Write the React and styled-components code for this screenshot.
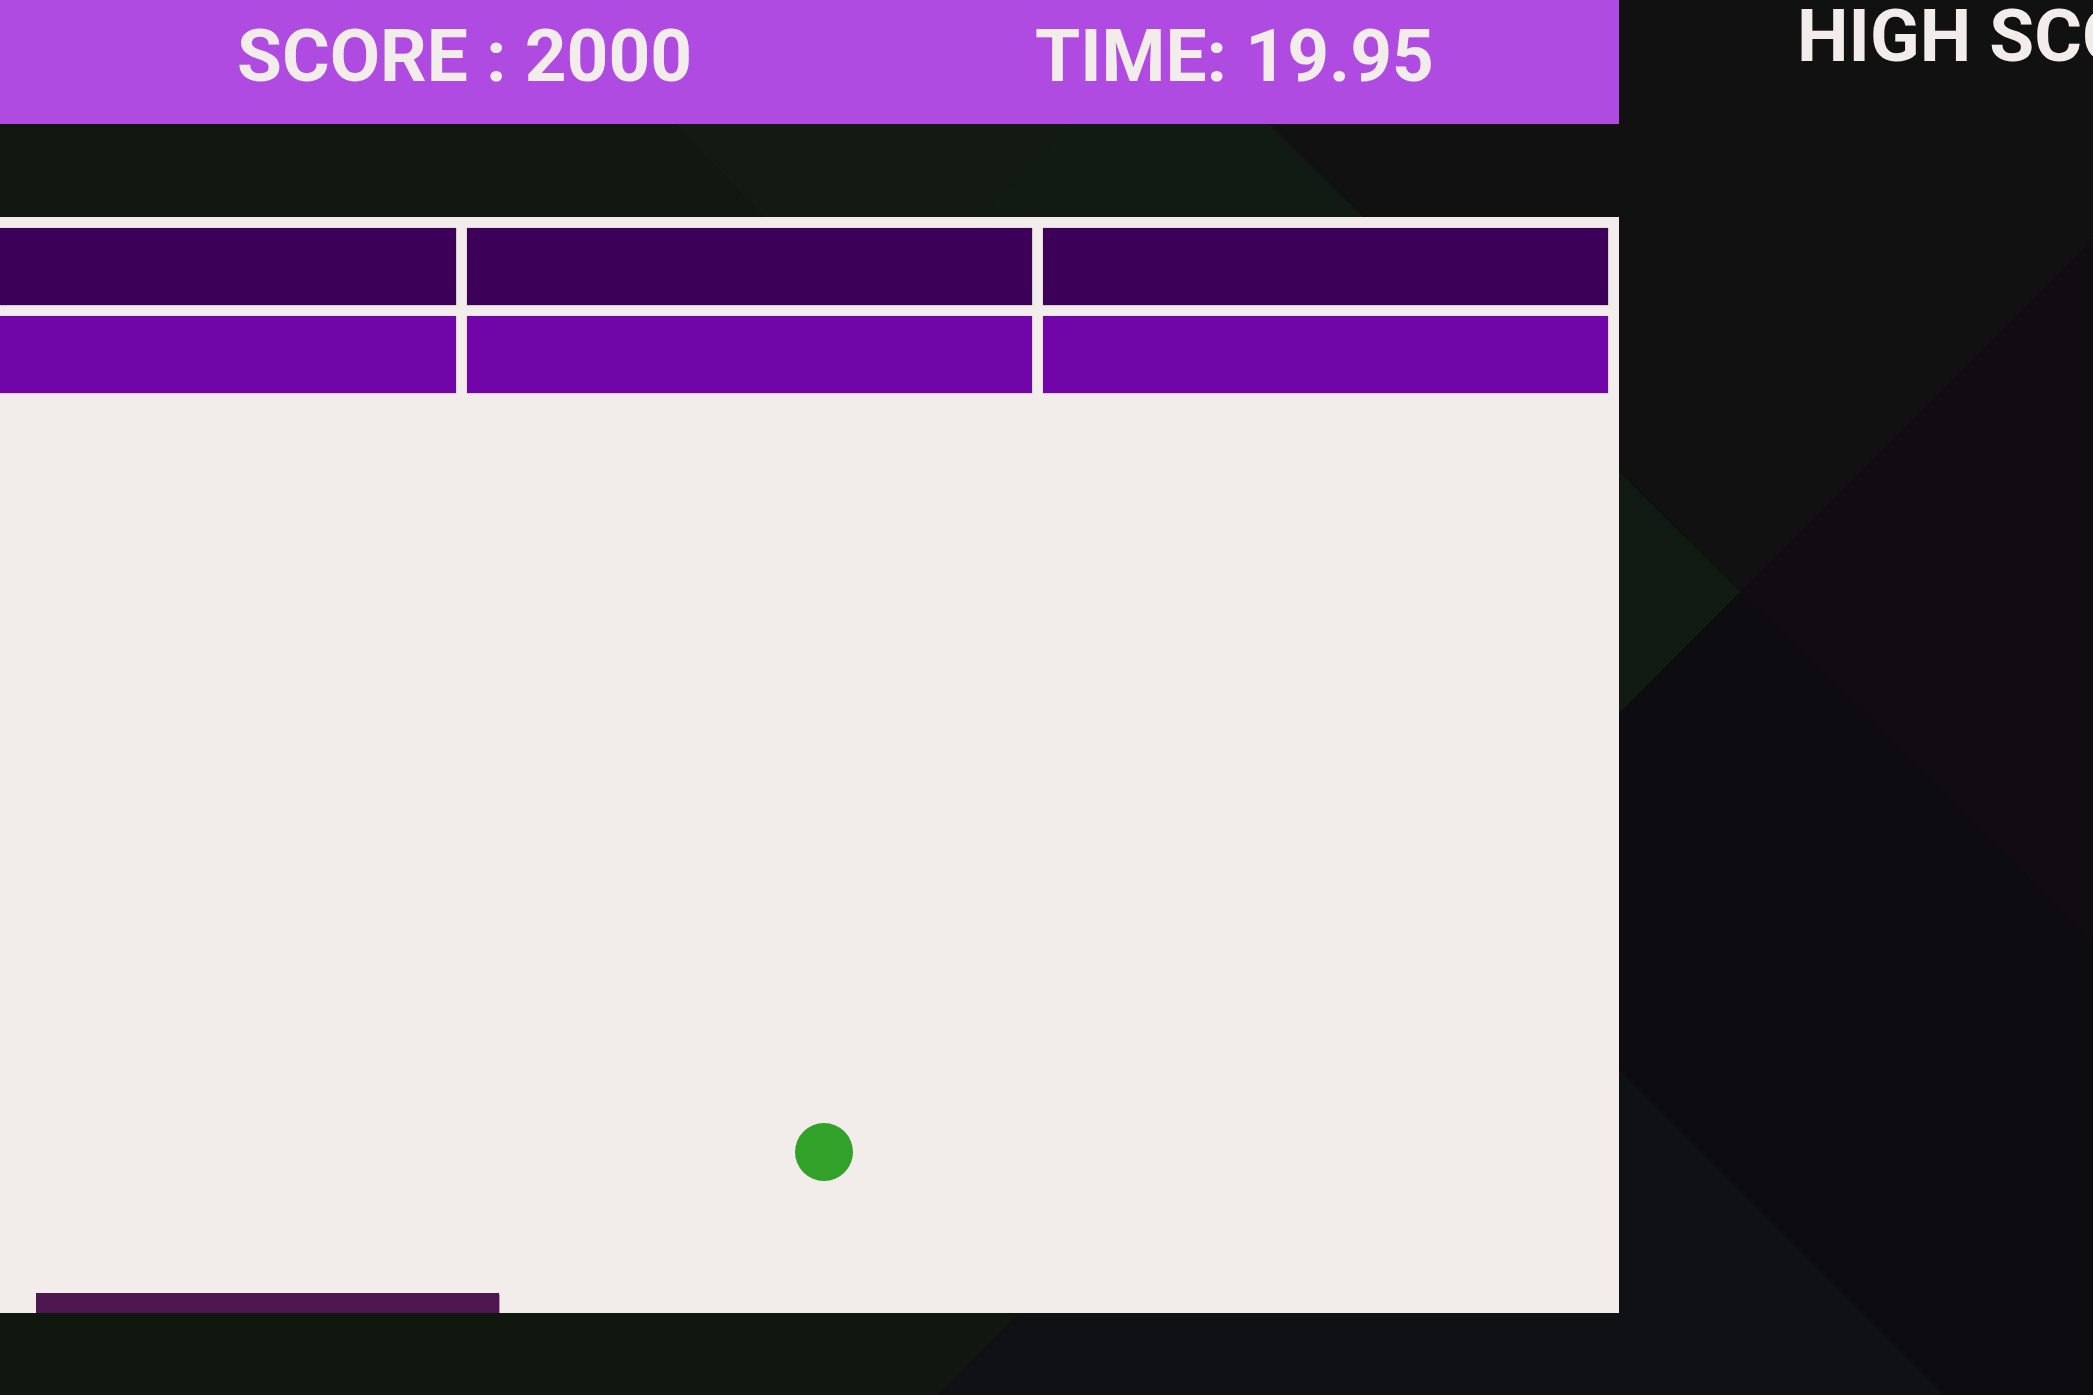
import React from "react";
import styled, { createGlobalStyle } from "styled-components";

const GlobalStyle = createGlobalStyle`
  html, body {
    margin: 0;
    padding: 0;
    background: #121112;
    overflow: hidden;
    font-family: Roboto, "Liberation Sans", Arial, sans-serif;
  }
  #root { height: 100vh; }
`;

const Page = styled.div`
  position: relative;
  display: flex;
  width: 100vw;
  height: 100vh;
  overflow: hidden;
`;

const Backdrop = styled.svg`
  position: absolute;
  inset: 0;
  width: 100%;
  height: 100%;
  z-index: 0;
`;

const GameColumn = styled.main`
  position: relative;
  z-index: 1;
  flex: 0 0 1619px;
  display: flex;
  flex-direction: column;
  gap: 93px;
`;

const ScoreBar = styled.header`
  height: 124px;
  box-sizing: border-box;
  background: #af4be0;
  display: grid;
  grid-template-columns: 798px auto;
  align-items: start;
  padding: 20px 0 0 237px;
`;

const Stat = styled.span`
  font-size: 73px;
  line-height: 1;
  font-weight: 700;
  color: #f2edea;
  white-space: nowrap;
`;

const Board = styled.section`
  position: relative;
  height: 1096px;
  background: #f2edea;
  overflow: hidden;
`;

const BrickGrid = styled.div`
  display: grid;
  grid-template-columns: 1fr 565px 565px;
  grid-auto-rows: 77px;
  gap: 11px;
  padding: 11px 11px 0 0;
`;

const Brick = styled.div`
  background: ${(p) => p.$color};
  box-shadow: 0 0 1.5px 0.5px ${(p) => p.$edge};
`;

const Ball = styled.div`
  position: absolute;
  left: 795px;
  top: 906px;
  width: 58px;
  height: 58px;
  border-radius: 50%;
  background: #31a12a;
`;

const Paddle = styled.div`
  position: absolute;
  left: 36px;
  bottom: 0;
  width: 463px;
  height: 20px;
  background: #4e1750;
  box-shadow: 0 0 1px 0.5px rgba(140, 90, 140, 0.6);
`;

const Sidebar = styled.aside`
  position: relative;
  z-index: 1;
  flex: 1;
  min-width: 0;
  overflow: hidden;
  padding-left: 178px;
`;

const SideTitle = styled.h2`
  margin: 0;
  font-size: 73px;
  line-height: 1;
  font-weight: 700;
  color: #f2edea;
  white-space: nowrap;
`;

const rows = [
  { color: "#3d0058", edge: "rgba(120, 80, 130, 0.7)" },
  { color: "#7005a8", edge: "rgba(170, 110, 210, 0.7)" },
];

export default function App() {
  return (
    <>
      <GlobalStyle />
      <Page>
        <Backdrop viewBox="0 0 2093 1395" preserveAspectRatio="none">
          <rect x="0" y="0" width="2093" height="1395" fill="#121112" />
          <polygon points="0,0 1145,0 1740,592 938,1395 0,1395" fill="#111811" />
          <polygon points="0,1000 1380,952 938,1395 0,1395" fill="#0f170f" />
          <polygon points="558,0 1145,0 1169,24 875,335" fill="#131913" />
          <polygon points="1169,24 1740,592 1500,832 900,300" fill="#121a14" />
          <polygon points="1740,592 2093,239 2093,1395 938,1395" fill="#0d0d11" />
          <polygon points="1740,592 2093,239 2093,943" fill="#100c12" />
          <polygon points="1440,891 1944,1395 938,1395" fill="#101115" />
        </Backdrop>
        <GameColumn>
          <ScoreBar>
            <Stat>SCORE : 2000</Stat>
            <Stat>TIME: 19.95</Stat>
          </ScoreBar>
          <Board>
            <BrickGrid>
              {rows.map((r, i) =>
                [0, 1, 2].map((c) => (
                  <Brick key={`${i}-${c}`} $color={r.color} $edge={r.edge} />
                ))
              )}
            </BrickGrid>
            <Ball />
            <Paddle />
          </Board>
        </GameColumn>
        <Sidebar>
          <SideTitle>HIGH SCORE</SideTitle>
        </Sidebar>
      </Page>
    </>
  );
}
